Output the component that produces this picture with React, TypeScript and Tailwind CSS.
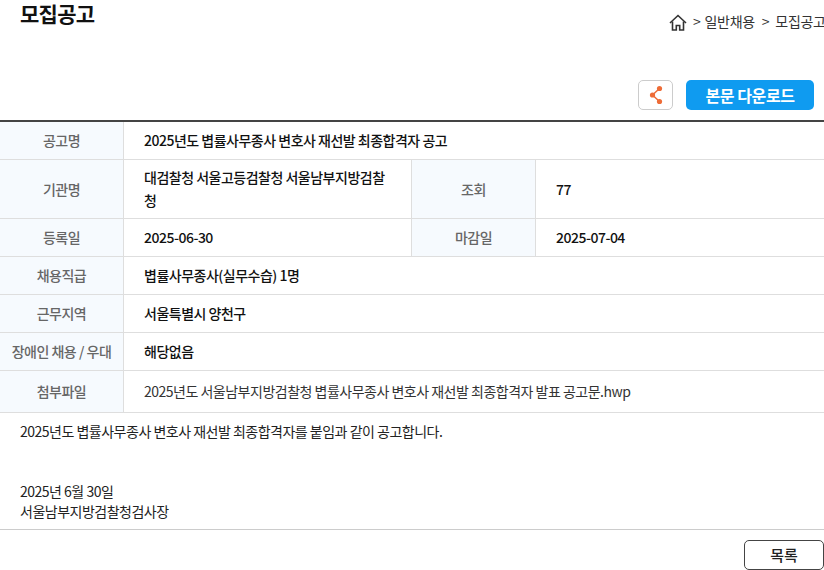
import React from "react";

const font = { fontFamily: '"Noto Sans CJK KR", "Noto Sans", sans-serif' };

const Label: React.FC<{ children: React.ReactNode; className?: string }> = ({ children, className }) => (
  <div className={`flex items-center justify-center bg-[#f6fafe] text-[14px] font-medium text-[#666] tracking-[-0.5px] ${className || ""}`}>
    {children}
  </div>
);

const Value: React.FC<{ children: React.ReactNode; className?: string }> = ({ children, className }) => (
  <div className={`flex items-center pl-5 pr-6 text-[14px] font-medium leading-[23px] text-[#111] tracking-[-0.5px] ${className || ""}`}>
    {children}
  </div>
);

const Row: React.FC<{ h: string; children: React.ReactNode }> = ({ h, children }) => (
  <div className={`flex border-b border-[#dedede] ${h}`}>{children}</div>
);

export default function App() {
  return (
    <div className="h-[570px] w-[824px] overflow-hidden bg-white" style={font}>
      <div className="flex h-[80px] items-start justify-between">
        <h1 className="pl-5 text-[21px] leading-[27px] font-bold text-[#111] tracking-[-0.7px]">모집공고</h1>
        <div className="mt-[11px] flex w-[155px] shrink-0 items-center gap-[6px] overflow-hidden whitespace-nowrap text-[14px] leading-[20px] text-[#333] tracking-[-0.3px]">
          <svg className="mt-[3px] shrink-0" width="18" height="17" viewBox="0 0 18 17" fill="none" stroke="#333" strokeWidth="1.6">
            <path d="M1 9 9 1.5 17 9" />
            <path d="M3.5 7.5V16h3.8v-4.5h3.4V16h3.8V7.5" />
          </svg>
          <span className="flex">
            <span>&gt;</span>
            <span className="ml-[4px]">일반채용</span>
            <span className="ml-[7px]">&gt;</span>
            <span className="ml-[6px]">모집공고</span>
          </span>
        </div>
      </div>

      <div className="flex h-[30px] justify-end gap-[13px] pr-[10px]">
        <button className="flex h-[30px] w-[35px] items-center justify-center rounded-[5px] border border-[#ccc] bg-white">
          <svg width="14" height="20" viewBox="0 0 14 20" fill="none">
            <path d="M10.5 3.5 3.5 10l7 6.5" stroke="#ee6c37" strokeWidth="1.5" />
            <circle cx="10.5" cy="3.5" r="2.6" fill="#ee6c37" />
            <circle cx="3.5" cy="10" r="2.6" fill="#ee6c37" />
            <circle cx="10.5" cy="16.5" r="2.6" fill="#ee6c37" />
          </svg>
        </button>
        <button className="h-[30px] w-[128px] rounded-[5px] bg-[#0f9bf0] text-[16px] font-bold text-white tracking-[-0.4px]">
          본문 다운로드
        </button>
      </div>

      <div className="mt-[10px] border-t-2 border-[#444]">
        <Row h="h-[38px]">
          <Label className="w-[124px] border-r border-[#dedede]">공고명</Label>
          <Value className="flex-1">2025년도 볍률사무종사 변호사 재선발 최종합격자 공고</Value>
        </Row>
        <Row h="h-[59px]">
          <Label className="w-[124px] border-r border-[#dedede]">기관명</Label>
          <Value className="w-[288px] border-r border-[#dedede]">대검찰청 서울고등검찰청 서울남부지방검찰청</Value>
          <Label className="w-[124px] border-r border-[#dedede]">조회</Label>
          <Value className="flex-1">77</Value>
        </Row>
        <Row h="h-[38px]">
          <Label className="w-[124px] border-r border-[#dedede]">등록일</Label>
          <Value className="w-[288px] border-r border-[#dedede]">2025-06-30</Value>
          <Label className="w-[124px] border-r border-[#dedede]">마감일</Label>
          <Value className="flex-1">2025-07-04</Value>
        </Row>
        <Row h="h-[38px]">
          <Label className="w-[124px] border-r border-[#dedede]">채용직급</Label>
          <Value className="flex-1">볍률사무종사(실무수습) 1명</Value>
        </Row>
        <Row h="h-[38px]">
          <Label className="w-[124px] border-r border-[#dedede]">근무지역</Label>
          <Value className="flex-1">서울특별시 양천구</Value>
        </Row>
        <Row h="h-[38px]">
          <Label className="w-[124px] border-r border-[#dedede]">장애인 채용 / 우대</Label>
          <Value className="flex-1">해당없음</Value>
        </Row>
        <Row h="h-[42px]">
          <Label className="w-[124px] border-r border-[#dedede]">첨부파일</Label>
          <Value className="flex-1 font-normal text-[#333]">2025년도 서울남부지방검찰청 볍률사무종사 변호사 재선발 최종합격자 발표 공고문.hwp</Value>
        </Row>
      </div>

      <div className="h-[117px] border-b border-[#ccc] px-5 pt-[8px] text-[14px] leading-[20px] text-[#222] tracking-[-0.5px]">
        <p>2025년도 볍률사무종사 변호사 재선발 최종합격자를 붙임과 같이 공고합니다.</p>
        <p className="mt-[40px]">2025년 6월 30일</p>
        <p>서울남부지방검찰청검사장</p>
      </div>

      <div className="mt-[10px] flex justify-end">
        <button className="h-[30px] w-[80px] rounded-[5px] border border-[#444] bg-white text-[15px] font-medium text-[#222]">
          목록
        </button>
      </div>
    </div>
  );
}
